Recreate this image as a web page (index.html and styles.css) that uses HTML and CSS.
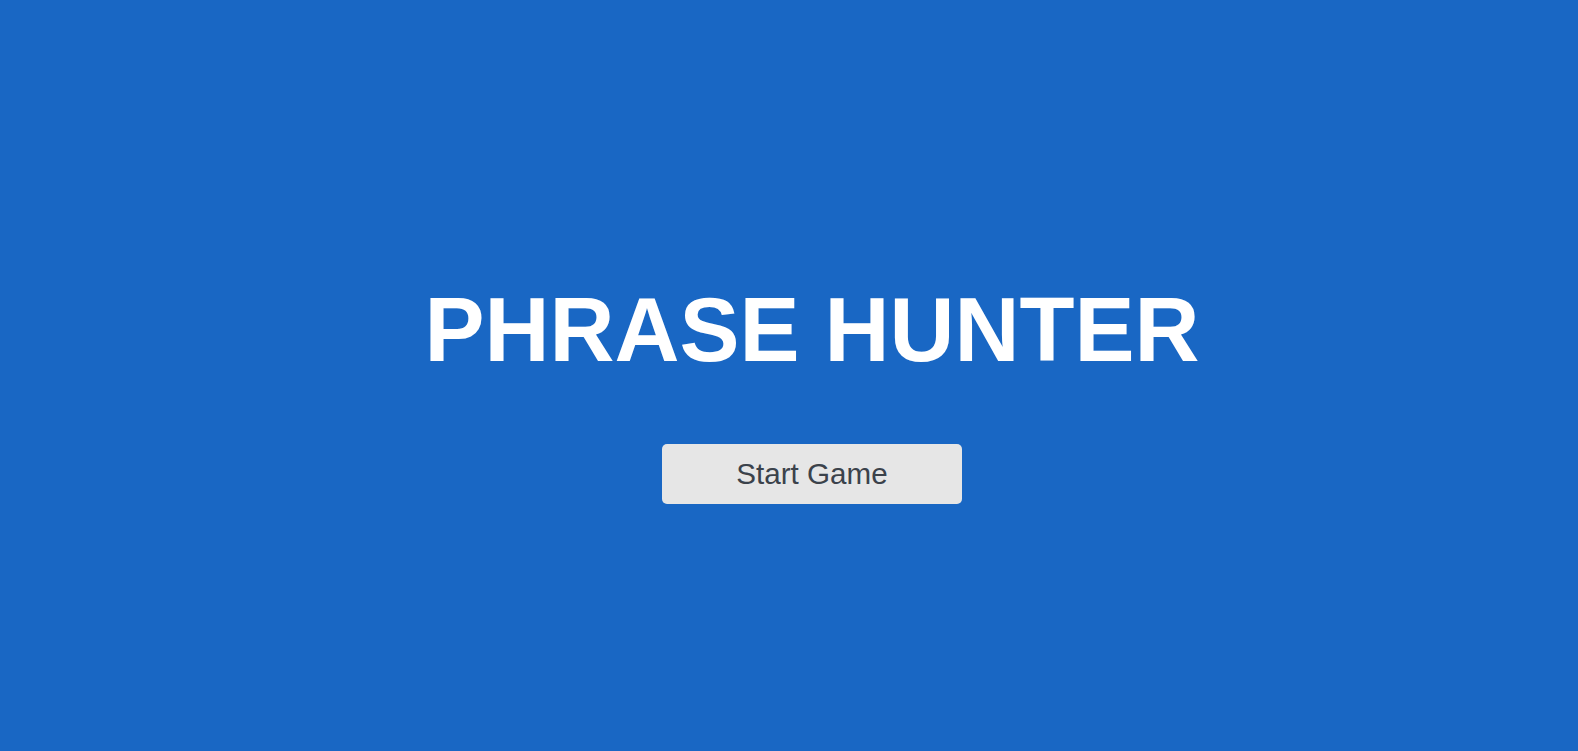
FILE: index.html
```html
<!DOCTYPE html>
<html lang="en">
<head>
<meta charset="utf-8">
<title>Phrase Hunter</title>
<link rel="stylesheet" href="styles.css">
</head>
<body>
  <div class="overlay">
    <h1 class="title">PHRASE HUNTER</h1>
    <button class="btn-start" type="button">Start Game</button>
  </div>
</body>
</html>
```

FILE: styles.css
```css
html, body {
  margin: 0;
  padding: 0;
  height: 100%;
}

body {
  background: #1967c4;
  font-family: "Liberation Sans", Arial, sans-serif;
}

.overlay {
  box-sizing: border-box;
  height: 100vh;
  display: flex;
  flex-direction: column;
  align-items: center;
  justify-content: center;
  padding-top: 32px;
  padding-left: 46px;
  gap: 62px;
}

.title {
  margin: 0;
  color: #ffffff;
  font-size: 90px;
  font-weight: 700;
  line-height: normal;
  text-align: center;
}

.btn-start {
  width: 300px;
  height: 60px;
  border: none;
  border-radius: 5px;
  background: #e6e6e6;
  color: #3b424b;
  font-family: "Liberation Sans", Arial, sans-serif;
  font-size: 29.6px;
  cursor: pointer;
}
```
